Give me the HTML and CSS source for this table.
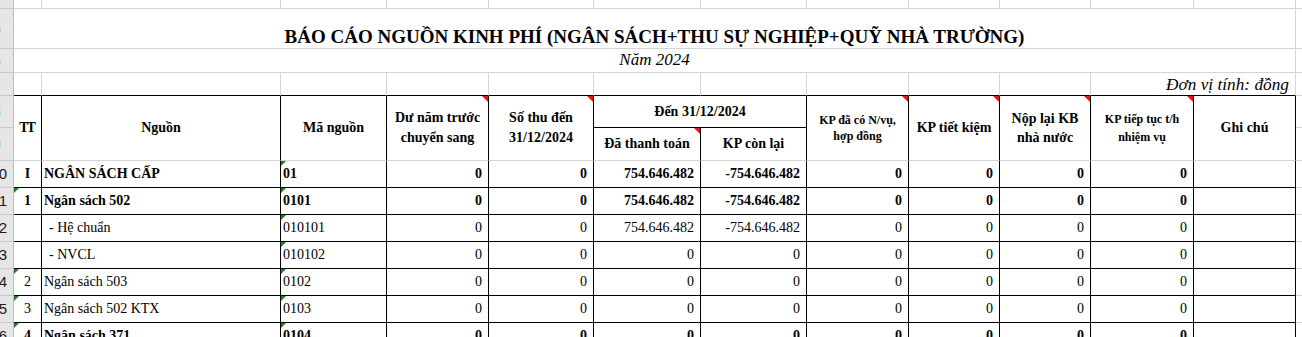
FILE: index.html
```html
<!DOCTYPE html>
<html lang="vi">
<head>
<meta charset="utf-8">
<title>Báo cáo nguồn kinh phí</title>
<link rel="stylesheet" href="styles.css">
</head>
<body>
<table class="sheet">
  <colgroup>
    <col class="c-rh"><col class="c-tt"><col class="c-src"><col class="c-code"><col class="c-du"><col class="c-thu"><col class="c-paid"><col class="c-left"><col class="c-kpnv"><col class="c-tk"><col class="c-nop"><col class="c-tiep"><col class="c-note"><col class="c-x">
  </colgroup>
  <tbody>
    <tr class="r-top">
      <th class="rh"></th>
      <td></td><td></td><td></td><td></td><td></td><td></td><td></td><td></td><td></td><td></td><td></td><td></td>
      <td class="x"></td>
    </tr>
    <tr class="r-title">
      <th class="rh"><div class="rn one">5</div></th>
      <td class="title" colspan="12">BÁO CÁO NGUỒN KINH PHÍ (NGÂN SÁCH+THU SỰ NGHIỆP+QUỸ NHÀ TRƯỜNG)</td>
      <td class="x"></td>
    </tr>
    <tr class="r-year">
      <th class="rh"><div class="rn one">6</div></th>
      <td class="year" colspan="12">Năm 2024</td>
      <td class="x"></td>
    </tr>
    <tr class="r-unit">
      <th class="rh"><div class="rn one">7</div></th>
      <td class="bb"></td><td class="bb"></td><td class="bb"></td><td class="bb"></td><td class="bb"></td><td class="bb"></td><td class="bb"></td><td class="bb"></td><td class="bb"></td><td class="bb"></td>
      <td class="bb unit" colspan="2">Đơn vị tính: đồng</td>
      <td class="x"></td>
    </tr>
    <tr class="r-h1">
      <th class="rh"><div class="rn one">8</div></th>
      <th class="hd tt-h" rowspan="2">TT</th>
      <th class="hd" rowspan="2">Nguồn</th>
      <th class="hd" rowspan="2">Mã nguồn</th>
      <th class="hd two note" rowspan="2">Dư năm trước<br>chuyển sang</th>
      <th class="hd two note" rowspan="2">Số thu đến<br>31/12/2024</th>
      <th class="hd span bb" colspan="2">Đến 31/12/2024</th>
      <th class="hd small note" rowspan="2">KP đã có N/vụ,<br>hợp đồng</th>
      <th class="hd note" rowspan="2">KP tiết kiệm</th>
      <th class="hd two tight note" rowspan="2">Nộp lại KB<br>nhà nước</th>
      <th class="hd small wide note" rowspan="2">KP tiếp tục t/h<br>nhiệm vụ</th>
      <th class="hd" rowspan="2">Ghi chú</th>
      <td class="x"></td>
    </tr>
    <tr class="r-h2">
      <th class="rh"><div class="rn one">9</div></th>
      <th class="hd note">Đã thanh toán</th>
      <th class="hd">KP còn lại</th>
      <td class="x"></td>
    </tr>
    <tr class="row bold">
      <th class="rh"><div class="rn">10</div></th>
      <td class="tt">I</td>
      <td class="src">NGÂN SÁCH CẤP</td>
      <td class="code flag">01</td>
      <td class="num">0</td><td class="num">0</td>
      <td class="num">754.646.482</td><td class="num">-754.646.482</td>
      <td class="num">0</td><td class="num">0</td><td class="num">0</td><td class="num">0</td>
      <td></td>
      <td class="x"></td>
    </tr>
    <tr class="row bold">
      <th class="rh"><div class="rn">11</div></th>
      <td class="tt flag">1</td>
      <td class="src">Ngân sách 502</td>
      <td class="code flag">0101</td>
      <td class="num">0</td><td class="num">0</td>
      <td class="num">754.646.482</td><td class="num">-754.646.482</td>
      <td class="num">0</td><td class="num">0</td><td class="num">0</td><td class="num">0</td>
      <td></td>
      <td class="x"></td>
    </tr>
    <tr class="row">
      <th class="rh"><div class="rn">12</div></th>
      <td class="tt"></td>
      <td class="src ind">- Hệ chuẩn</td>
      <td class="code flag">010101</td>
      <td class="num">0</td><td class="num">0</td>
      <td class="num">754.646.482</td><td class="num">-754.646.482</td>
      <td class="num">0</td><td class="num">0</td><td class="num">0</td><td class="num">0</td>
      <td></td>
      <td class="x"></td>
    </tr>
    <tr class="row">
      <th class="rh"><div class="rn">13</div></th>
      <td class="tt"></td>
      <td class="src ind">- NVCL</td>
      <td class="code flag">010102</td>
      <td class="num">0</td><td class="num">0</td>
      <td class="num">0</td><td class="num">0</td>
      <td class="num">0</td><td class="num">0</td><td class="num">0</td><td class="num">0</td>
      <td></td>
      <td class="x"></td>
    </tr>
    <tr class="row">
      <th class="rh"><div class="rn">14</div></th>
      <td class="tt flag">2</td>
      <td class="src">Ngân sách 503</td>
      <td class="code flag">0102</td>
      <td class="num">0</td><td class="num">0</td>
      <td class="num">0</td><td class="num">0</td>
      <td class="num">0</td><td class="num">0</td><td class="num">0</td><td class="num">0</td>
      <td></td>
      <td class="x"></td>
    </tr>
    <tr class="row">
      <th class="rh"><div class="rn">15</div></th>
      <td class="tt flag">3</td>
      <td class="src">Ngân sách 502 KTX</td>
      <td class="code flag">0103</td>
      <td class="num">0</td><td class="num">0</td>
      <td class="num">0</td><td class="num">0</td>
      <td class="num">0</td><td class="num">0</td><td class="num">0</td><td class="num">0</td>
      <td></td>
      <td class="x"></td>
    </tr>
    <tr class="row bold">
      <th class="rh"><div class="rn">16</div></th>
      <td class="tt flag">4</td>
      <td class="src">Ngân sách 371</td>
      <td class="code flag">0104</td>
      <td class="num">0</td><td class="num">0</td>
      <td class="num">0</td><td class="num">0</td>
      <td class="num">0</td><td class="num">0</td><td class="num">0</td><td class="num">0</td>
      <td></td>
      <td class="x"></td>
    </tr>
  </tbody>
</table>
</body>
</html>
```

FILE: styles.css
```css
html, body {
  margin: 0;
  padding: 0;
  background: #ffffff;
  overflow: hidden;
}

body {
  font-family: "Liberation Serif", "Times New Roman", serif;
  color: #000000;
}

.sheet {
  border-collapse: separate;
  border-spacing: 0;
  table-layout: fixed;
  width: 1302px;
}

.sheet td,
.sheet th {
  box-sizing: border-box;
  padding: 0 2px;
  border: 0;
  border-right: 1px solid #d4d4d4;
  border-bottom: 1px solid #d4d4d4;
  font-size: 14px;
  font-weight: normal;
  white-space: nowrap;
  overflow: hidden;
  vertical-align: bottom;
  position: relative;
}

/* column widths */
.c-rh { width: 14px; }
.c-tt { width: 28px; }
.c-src { width: 239px; }
.c-code { width: 106px; }
.c-du { width: 102px; }
.c-thu { width: 105px; }
.c-paid { width: 107px; }
.c-left { width: 106px; }
.c-kpnv { width: 102px; }
.c-tk { width: 91px; }
.c-nop { width: 91px; }
.c-tiep { width: 103px; }
.c-note { width: 102px; }
.c-x { width: 6px; }

/* row heights */
.r-top { height: 9px; }
.r-title { height: 40px; }
.r-year { height: 24px; }
.r-unit { height: 23px; }
.r-h1 { height: 32px; }
.r-h2 { height: 33px; }
.row { height: 27px; }

/* excel row headers */
.sheet .rh {
  padding: 0;
  background: #e6e6e6;
  border-right: 1px solid #bcbcbc;
  border-bottom: 1px solid #c9c9c9;
  vertical-align: middle;
}

.rn {
  width: 13px;
  overflow: hidden;
  direction: rtl;
  box-sizing: border-box;
  padding-right: 6px;
  font-family: "Liberation Sans", Arial, sans-serif;
  font-size: 15px;
  line-height: 16px;
  color: #1a1a1a;
}

.rn.one {
  padding-right: 12px;
  color: #8fbfe6;
}

.sheet .x {
  border-right: 0;
  padding: 0;
}

.sheet .bb {
  border-bottom-color: #000000;
}

/* title block */
.sheet .title {
  text-align: center;
  font-size: 19px;
  font-weight: bold;
  line-height: 22px;
}

.sheet .year {
  text-align: center;
  font-size: 17px;
  font-style: italic;
  line-height: 20px;
  padding-bottom: 2px;
}

.sheet .unit {
  text-align: right;
  font-size: 17.3px;
  font-style: italic;
  line-height: 20px;
  padding-right: 6px;
  overflow: visible;
}

/* header cells */
.sheet .hd {
  border-right-color: #000000;
  font-weight: bold;
  text-align: center;
  vertical-align: middle;
  line-height: 16px;
  white-space: nowrap;
}

.sheet .hd.two { line-height: 20px; }
.sheet .hd.tight { line-height: 19px; }
.sheet .hd.small { font-size: 12px; line-height: 16px; }
.sheet .hd.small.wide { line-height: 18px; }
.sheet .hd.span { border-bottom-color: #000000; }
.sheet .tt-h { letter-spacing: -2px; padding-right: 4px; }

/* data rows */
.row td {
  border-right-color: #000000;
  border-bottom-color: #000000;
  vertical-align: middle;
  line-height: 16px;
}

.row td.x {
  border-bottom-color: #d4d4d4;
}

.bold td { font-weight: bold; }

.sheet .tt { text-align: center; }
.sheet .src { padding-left: 2px; }
.sheet .src.ind { padding-left: 7px; }
.sheet .code { padding-left: 2px; }
.sheet .num { text-align: right; padding-right: 6px; }

/* excel cell indicators */
.flag::before {
  content: "";
  position: absolute;
  left: 0;
  top: 0;
  border-top: 5px solid #1f7d26;
  border-right: 5px solid transparent;
}

.note::after {
  content: "";
  position: absolute;
  right: 0;
  top: 0;
  border-top: 6px solid #e51515;
  border-left: 6px solid transparent;
}
```
